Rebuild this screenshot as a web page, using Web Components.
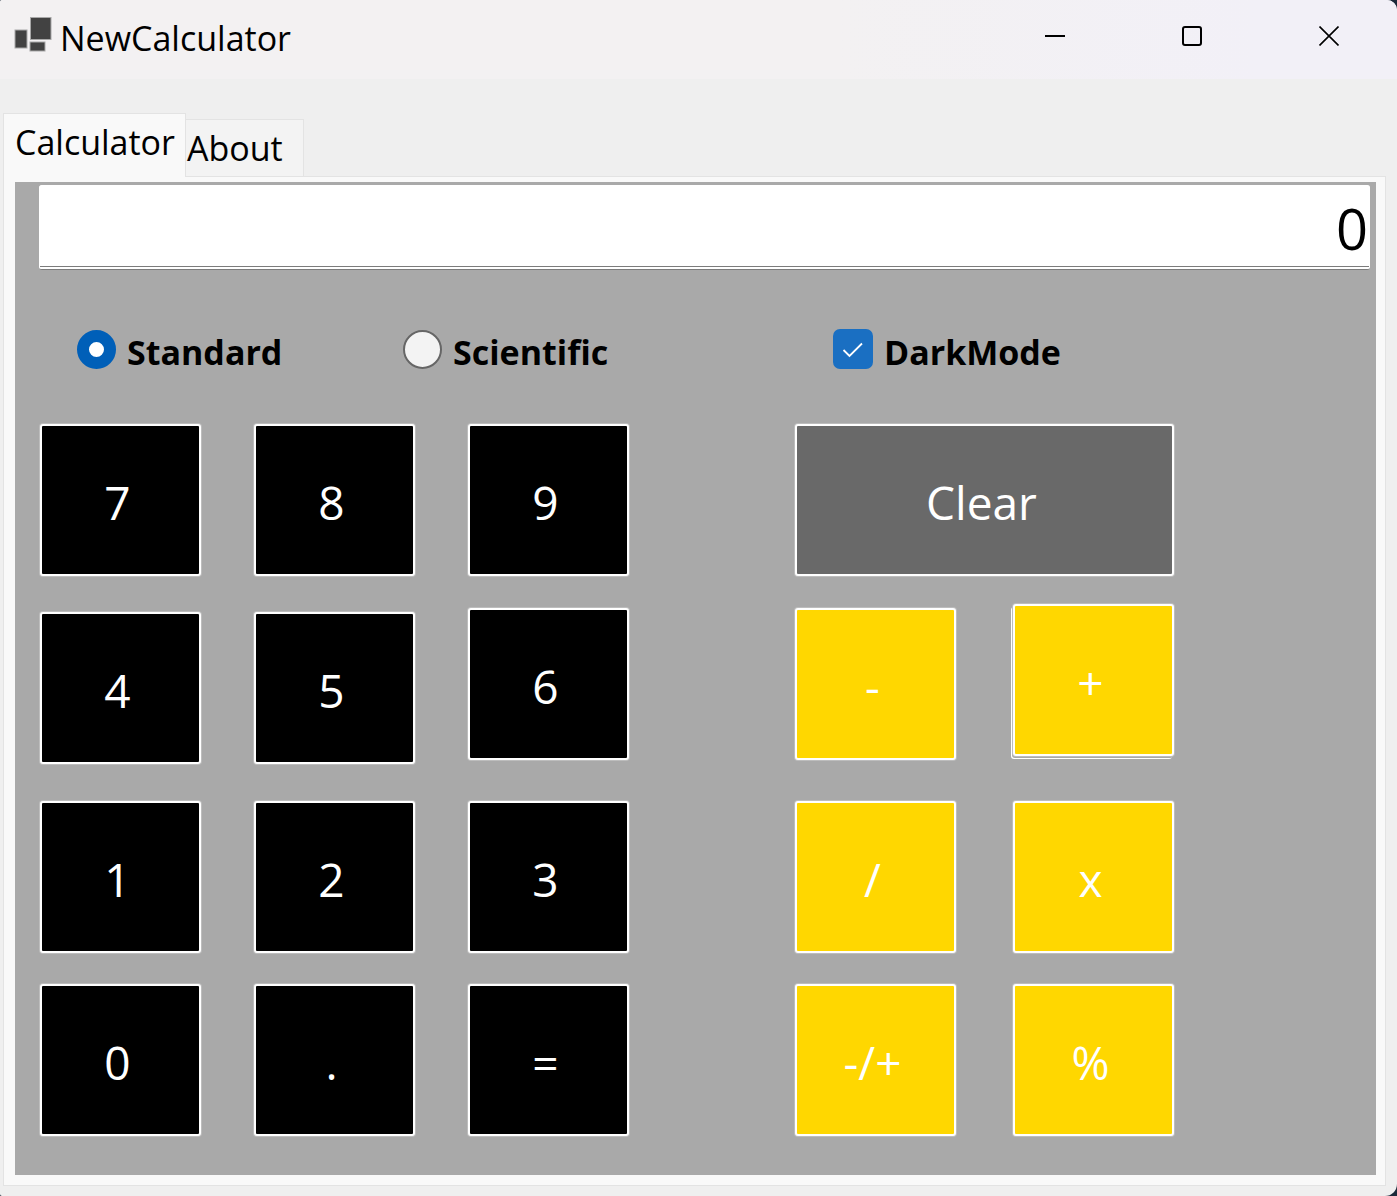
<!DOCTYPE html>
<html lang="en">
<head>
<meta charset="utf-8">
<title>NewCalculator</title>
<style>
  html { background: #1b2a3a; }
  body { margin: 0; font-family: "Open Sans", "Noto Sans", sans-serif; font-size: 34px; color: #000; }
</style>
</head>
<body>
<calc-window>
  <title-bar slot="title">NewCalculator</title-bar>
  <tab-strip slot="tabs"></tab-strip>
  <calc-display></calc-display>
  <calc-options></calc-options>
  <calc-keypad></calc-keypad>
</calc-window>

<script>
const define = (name, html) => customElements.define(name, class extends HTMLElement {
  constructor() {
    super();
    this.attachShadow({ mode: "open" }).innerHTML = html;
  }
});

define("calc-window", `
  <style>
    :host { display: flex; flex-direction: column; min-height: 100vh; box-sizing: border-box;
      padding-bottom: 10px; background: #efefef; border-radius: 2px 10px 12px 2px; overflow: hidden; }
    .page { flex: 1; box-sizing: border-box; margin: 0 11px 0 3px; padding: 5px 9px 10px 11px;
      background: #f9f9f9; border: 1px solid #e3e3e3; display: flex; }
    .panel { flex: 1; background: #a9a9a9; padding: 3px 6px 39px 24px; }
  </style>
  <slot name="title"></slot>
  <slot name="tabs"></slot>
  <main class="page"><div class="panel"><slot></slot></div></main>
`);

define("title-bar", `
  <style>
    :host { display: flex; align-items: flex-start; height: 79px; background: linear-gradient(90deg, #f3f1f2 60%, #f2f0f7 90%); }
    .logo { margin: 16px 7px 0 13px; }
    h1 { flex: 1; margin: 0; font: inherit; line-height: 76px; }
    button { width: 137px; height: 72px; padding: 0; border: 0; background: none; display: grid; place-items: center; }
    button svg { fill: none; stroke: #000; stroke-width: 2; }
  </style>
  <svg class="logo" width="40" height="38" viewBox="0 0 40 38" aria-hidden="true">
    <g fill="#424242" stroke="#a8a8a8" stroke-width="1">
      <rect x="17.5" y="1.5" width="20.5" height="22"/>
      <rect x="2" y="14" width="12" height="18"/>
      <rect x="17" y="26" width="15" height="9"/>
    </g>
  </svg>
  <h1><slot></slot></h1>
  <button aria-label="Minimize"><svg width="20" height="20"><path d="M0 10H20"/></svg></button>
  <button aria-label="Maximize"><svg width="20" height="20"><rect x="1" y="1" width="18" height="18" rx="2"/></svg></button>
  <button aria-label="Close"><svg width="20" height="20"><path d="M0.5 0.5L19.5 19.5M19.5 0.5L0.5 19.5" stroke-width="1.6"/></svg></button>
`);

define("tab-strip", `
  <style>
    :host { display: block; padding: 34px 0 0 3px; }
    div { display: flex; align-items: flex-end; }
    button { box-sizing: border-box; font: inherit; color: inherit; line-height: 56px; border: 1px solid #e3e3e3;
      border-bottom: 0; background: #f3f3f3; height: 57px; padding: 0 20px 0 1px; border-left: 0; }
    button[aria-selected=true] { position: relative; height: 64px; margin-bottom: -1px; padding: 0 10px 7px 11px;
      background: #f9f9f9; border-left: 1px solid #e3e3e3; }
  </style>
  <div role="tablist">
    <button role="tab" aria-selected="true">Calculator</button>
    <button role="tab" aria-selected="false">About</button>
  </div>
`);

define("calc-display", `
  <style>
    :host { display: block; }
    input { display: block; box-sizing: border-box; width: 100%; height: 85px; margin: 0; padding: 3px 1px 0;
      border: 1px solid #fff; border-bottom: 4px double #7c7c7c; border-radius: 3px; background: #fff; color: #000;
      font: inherit; font-size: 56px; line-height: 76px; text-align: right; outline: 0; }
  </style>
  <input type="text" value="0" readonly aria-label="Display">
`);

define("calc-options", `
  <style>
    :host { display: grid; grid-template-columns: 326px 430px auto; align-items: center; height: 40px;
      margin: 59px 0 55px; padding-left: 38px; font-weight: 700; }
    label { display: flex; align-items: center; gap: 11px; line-height: 34px; }
    .text { padding-top: 6px; }
    input { appearance: none; box-sizing: border-box; flex: none; margin: 0; width: 39px; height: 39px; }
    [type=radio] { border: 2px solid #666; border-radius: 50%; background: #f3f3f3; }
    [type=radio]:checked { border: 12px solid #005fb8; background: #fff; }
    .check { display: grid; }
    .check > * { grid-area: 1 / 1; }
    [type=checkbox] { width: 40px; height: 40px; border-radius: 7px; background: #f3f3f3; }
    [type=checkbox]:checked { background: #1a6fc2; }
    svg { fill: none; stroke: #fff; stroke-width: 1.8; pointer-events: none; }
    input:not(:checked) + svg { display: none; }
  </style>
  <label><input type="radio" name="mode" checked><span class="text">Standard</span></label>
  <label><input type="radio" name="mode"><span class="text">Scientific</span></label>
  <label><span class="check"><input type="checkbox" checked><svg width="40" height="40"><path d="M10.5 21L16.5 27L29 14.5"/></svg></span><span class="text">DarkMode</span></label>
`);

define("calc-key", `
  <style>
    :host { display: block; width: 161px; height: 152px; --key: #000; }
    :host([kind=operator]) { --key: #ffd700; }
    :host([kind=clear]) { --key: #696969; width: 379px; }
    button { box-sizing: border-box; width: 100%; height: 100%; margin: 0; padding: 4px 6px 0 0; border: 2px solid #fff;
      border-radius: 3px; box-shadow: 0 0 0 1px #bdbdbd; background: var(--key); color: #fff; font: inherit; }
    :host([focused]) button { box-shadow: 0 0 0 1px #bdbdbd, -1px 2px 0 0 #a9a9a9, -2px 3px 0 0 #fff; }
  </style>
  <button><slot></slot></button>
`);

define("calc-keypad", `
  <style>
    :host { display: flex; flex-direction: column; padding-left: 1px; font-size: 46px; }
    .row { display: flex; gap: 53px; }
    .right { margin-left: 113px; }
    .wide { margin-left: 4px; }
    .second { height: 160px; align-items: center; margin: 28px 0 37px; }
    .low { align-self: flex-end; }
    .high { align-self: flex-start; }
    .last { margin-top: 31px; }
  </style>
  <div class="row">
    <calc-key>7</calc-key><calc-key>8</calc-key><calc-key>9</calc-key>
    <calc-key class="right" kind="clear">Clear</calc-key>
  </div>
  <div class="row second">
    <calc-key class="low">4</calc-key><calc-key class="low">5</calc-key><calc-key>6</calc-key>
    <calc-key class="right" kind="operator">-</calc-key><calc-key class="wide high" kind="operator" focused>+</calc-key>
  </div>
  <div class="row">
    <calc-key>1</calc-key><calc-key>2</calc-key><calc-key>3</calc-key>
    <calc-key class="right" kind="operator">/</calc-key><calc-key class="wide" kind="operator">x</calc-key>
  </div>
  <div class="row last">
    <calc-key>0</calc-key><calc-key>.</calc-key><calc-key>=</calc-key>
    <calc-key class="right" kind="operator">-/+</calc-key><calc-key class="wide" kind="operator">%</calc-key>
  </div>
`);
</script>
</body>
</html>
